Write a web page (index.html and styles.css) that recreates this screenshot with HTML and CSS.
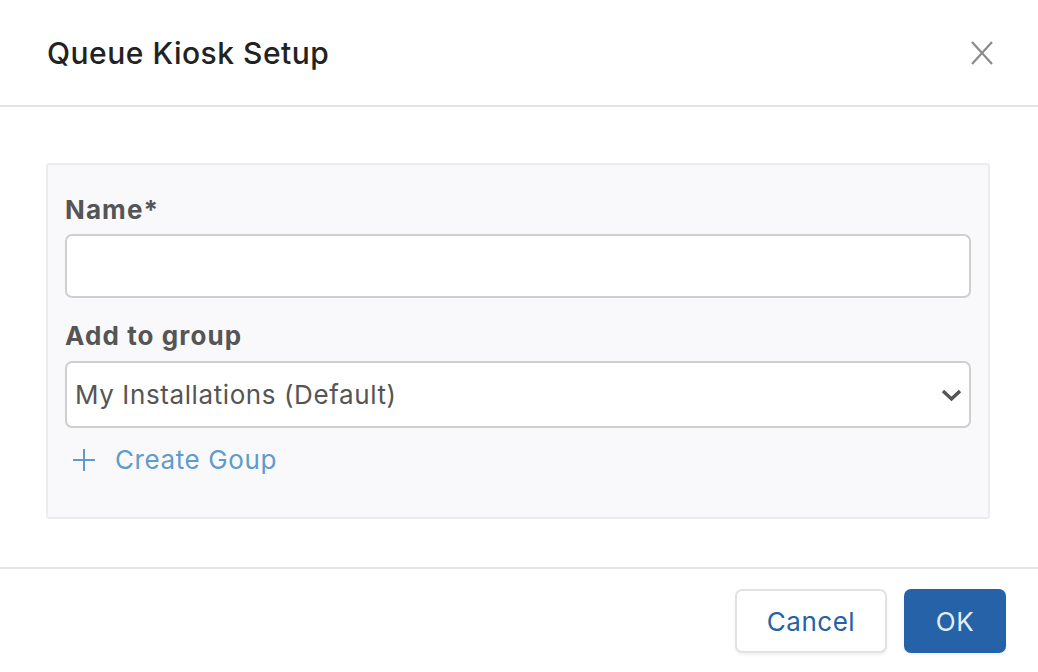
FILE: index.html
```html
<!DOCTYPE html>
<html>
<head>
<meta charset="utf-8">
<link rel="stylesheet" href="styles.css">
</head>
<body>
<div class="modal">
  <header class="modal-header">
    <h1 class="title">Queue Kiosk Setup</h1>
    <button class="close" aria-label="Close">
      <svg width="22" height="24" viewBox="0 0 22 24"><path d="M1 1 L21 23 M21 1 L1 23" stroke="#8a8a8a" stroke-width="2.2" fill="none"/></svg>
    </button>
  </header>
  <main class="modal-body">
    <section class="panel">
      <label class="label">Name*</label>
      <input class="input" type="text">
      <label class="label label-group">Add to group</label>
      <div class="select">
        <span class="select-text">My Installations (Default)</span>
        <svg class="chevron" width="21" height="13" viewBox="0 0 21 13"><path d="M2 2 L10.5 10 L19 2" stroke="#555" stroke-width="3.4" fill="none"/></svg>
      </div>
      <a class="create">
        <svg class="plus" width="22" height="22" viewBox="0 0 22 22"><path d="M11 0 V22 M0 11 H22" stroke="#5f9bcb" stroke-width="2" fill="none"/></svg>
        <span>Create Goup</span>
      </a>
    </section>
  </main>
  <footer class="modal-footer">
    <button class="btn btn-cancel">Cancel</button>
    <button class="btn btn-ok">OK</button>
  </footer>
</div>
</body>
</html>
```

FILE: styles.css
```css
* { box-sizing: border-box; }
html, body { margin: 0; padding: 0; background: #fff; }
body { font-family: Inter, "Liberation Sans", sans-serif; width: 1038px; height: 672px; overflow: hidden; }
.modal { display: flex; flex-direction: column; height: 672px; }
.modal-header {
  height: 107px;
  border-bottom: 2px solid #e4e4e4;
  display: flex; align-items: center; justify-content: space-between;
  padding: 0 45px 0 47px;
}
.title { margin: 0; font-size: 30px; font-weight: 500; color: #222; letter-spacing: 0.5px; padding-top: 1px; }
.close { background: none; border: 0; padding: 0; display: flex; margin-top: 1px; }
.modal-body { padding: 56px 48px 48px 46px; border-bottom: 2px solid #e4e4e4; }
.panel {
  background: #f9f9fb;
  border: 2px solid #eaecf0;
  border-radius: 3px;
  height: 356px;
  padding: 30px 17px 0 17px;
  display: flex; flex-direction: column;
}
.label { font-size: 26px; font-weight: 700; color: #555; line-height: 30px; letter-spacing: 1.1px; }
.input { margin-top: 9px; height: 64px; border: 2px solid #cfcfcf; border-radius: 7px; background: #fff; width: 100%; }
.label-group { margin-top: 23px; }
.select {
  margin-top: 10px; height: 67px; border: 2px solid #cfcfcf; border-radius: 7px; background: #fff;
  display: flex; align-items: center; justify-content: space-between; padding: 0 7px 0 8px;
}
.select-text { font-size: 26px; color: #555; letter-spacing: 0.6px; }
.chevron { margin-top: 2px; }
.create { margin-top: 16px; display: flex; align-items: center; gap: 20px; color: #5f9bcb; font-size: 26px; letter-spacing: 0.6px; padding-left: 8px; }
.modal-footer { flex: 1; display: flex; justify-content: flex-end; align-items: flex-start; gap: 17px; padding: 20px 32px 0 0; }
.btn { font-family: inherit; font-size: 26px; letter-spacing: 0.5px; height: 64px; border-radius: 7px; cursor: pointer; }
.btn-cancel { width: 152px; background: #fff; border: 2px solid #e2e2e2; color: #2561a6; box-shadow: 0 2px 3px rgba(0,0,0,0.06); }
.btn-ok { width: 102px; background: #2562a8; border: 0; color: #e6edf6; box-shadow: 0 2px 3px rgba(0,0,0,0.06); }
```
